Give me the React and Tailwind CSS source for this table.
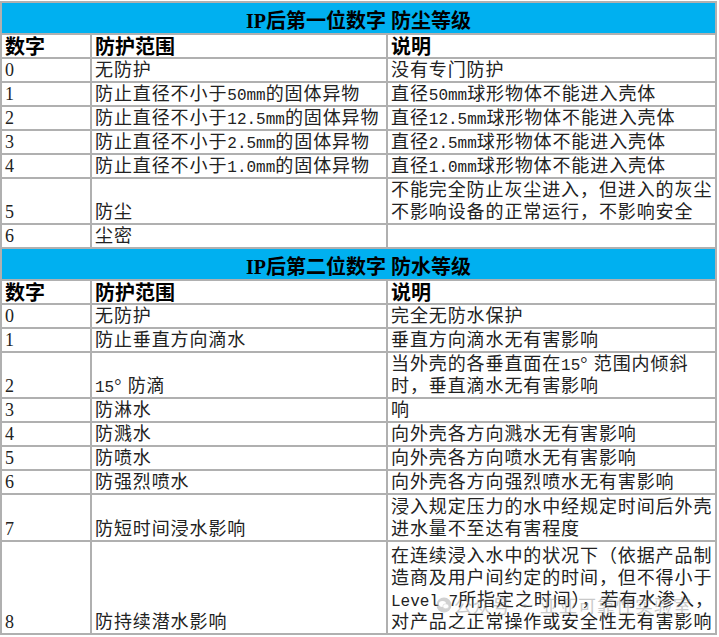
import React from "react";

const M = ({ children }) => (
  <span className="font-['Liberation_Mono',monospace] text-[16px] leading-none tracking-normal">{children}</span>
);

const dust = [
  ["0", "无防护", "没有专门防护", "h-[23px]"],
  ["1", <>防止直径不小于<M>50mm</M>的固体异物</>, <>直径<M>50mm</M>球形物体不能进入壳体</>, "h-[23px]"],
  ["2", <>防止直径不小于<M>12.5mm</M>的固体异物</>, <>直径<M>12.5mm</M>球形物体不能进入壳体</>, "h-[23px]"],
  ["3", <>防止直径不小于<M>2.5mm</M>的固体异物</>, <>直径<M>2.5mm</M>球形物体不能进入壳体</>, "h-[23px]"],
  ["4", <>防止直径不小于<M>1.0mm</M>的固体异物</>, <>直径<M>1.0mm</M>球形物体不能进入壳体</>, "h-[23px]"],
  ["5", "防尘", <>不能完全防止灰尘进入，但进入的灰尘<br />不影响设备的正常运行，不影响安全</>, "h-[46px]"],
  ["6", "尘密", "", "h-[23px]"],
];

const water = [
  ["0", "无防护", "完全无防水保护", "h-[23px]"],
  ["1", "防止垂直方向滴水", "垂直方向滴水无有害影响", "h-[23px]"],
  ["2", <><M>15</M>° 防滴</>, <>当外壳的各垂直面在<M>15</M>° 范围内倾斜<br />时，垂直滴水无有害影响</>, "h-[46px]"],
  ["3", "防淋水", "响", "h-[23px]"],
  ["4", "防溅水", "向外壳各方向溅水无有害影响", "h-[23px]"],
  ["5", "防喷水", "向外壳各方向喷水无有害影响", "h-[23px]"],
  ["6", "防强烈喷水", "向外壳各方向强烈喷水无有害影响", "h-[23px]"],
  ["7", "防短时间浸水影响", <>浸入规定压力的水中经规定时间后外壳<br />进水量不至达有害程度</>, "h-[47px]"],
  [
    "8",
    "防持续潜水影响",
    <>在连续浸入水中的状况下（依据产品制<br />造商及用户间约定的时间，但不得小于<br /><M>Level 7</M>所指定之时间），若有水渗入，<br />对产品之正常操作或安全性无有害影响</>,
    "h-[93px]",
  ],
];

function Title({ children }) {
  return (
    <tr className="h-[32px]">
      <td colSpan={3} className="bg-[#00b0f0] border-2 border-[#b0b0b0] text-center align-bottom pb-0 text-[20px] leading-[24px] font-bold text-black">
        {children}
      </td>
    </tr>
  );
}

function Head() {
  const c = "border-2 border-[#b0b0b0] align-bottom px-[3px] text-[20px] leading-[22px] font-bold text-black font-['Noto_Sans_CJK_SC',sans-serif]";
  return (
    <tr className="h-[24px]">
      <td className={c}>数字</td>
      <td className={c}>防护范围</td>
      <td className={c}>说明</td>
    </tr>
  );
}

function Rows({ rows }) {
  const c = "border-2 border-[#b0b0b0] align-bottom px-[3px] pb-0 text-[18px] leading-[22px] tracking-[0.9px] whitespace-nowrap overflow-hidden";
  return rows.map(([n, a, b, h]) => (
    <tr key={n} className={h}>
      <td className={c}>{n}</td>
      <td className={c}>{a}</td>
      <td className={c}>{b}</td>
    </tr>
  ));
}

export default function App() {
  return (
    <div className="relative w-[719px] h-[637px] bg-white overflow-hidden pt-[1px] text-[#222] font-['Liberation_Serif','Noto_Sans_CJK_SC',serif]">
      <table className="table-fixed border-collapse w-[715px]">
        <colgroup>
          <col className="w-[90px]" />
          <col className="w-[296px]" />
          <col className="w-[329px]" />
        </colgroup>
        <tbody>
          <Title>IP后第一位数字 防尘等级</Title>
          <Head />
          <Rows rows={dust} />
          <Title>IP后第二位数字 防水等级</Title>
          <Head />
          <Rows rows={water} />
        </tbody>
      </table>

      {/* watermark */}
      <div className="absolute left-[436px] top-[595px] flex items-center gap-[2px] opacity-45 text-[#8a8a8a] pointer-events-none">
        <svg width="16" height="16" viewBox="0 0 16 16">
          <circle cx="8" cy="8" r="7.5" fill="#9a9a9a" />
          <ellipse cx="6.5" cy="7" rx="3.6" ry="3" fill="#fff" />
          <ellipse cx="9.8" cy="9.3" rx="3" ry="2.5" fill="#fff" stroke="#9a9a9a" strokeWidth="0.6" />
        </svg>
        <span className="text-[18px] leading-[20px] font-['Noto_Sans_CJK_SC',sans-serif] tracking-[1px]">公众号 · 亚亚可靠性实验室</span>
      </div>
    </div>
  );
}
